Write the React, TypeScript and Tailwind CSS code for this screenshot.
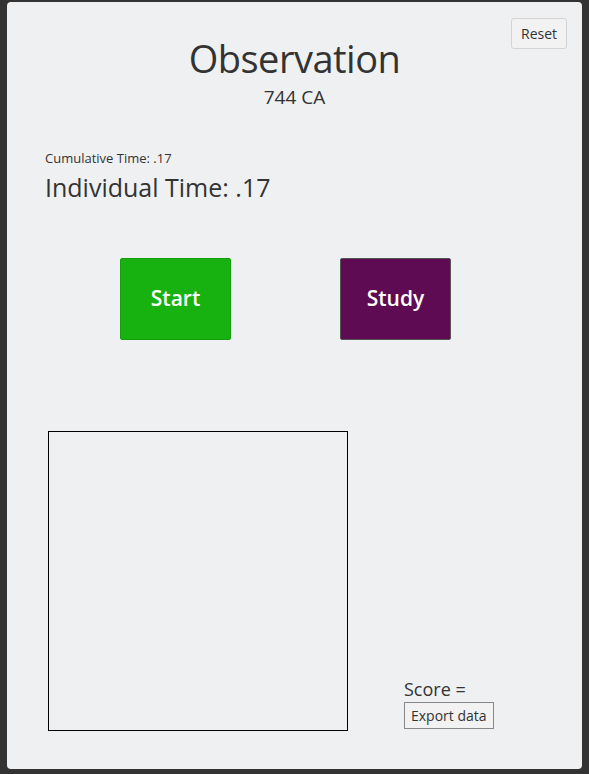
export default function App() {
  return (
    <div
      className="min-h-[774px] bg-[#333333] px-[7px] pt-[2px]"
      style={{ fontFamily: "'Open Sans', 'Noto Sans', sans-serif" }}
    >
      <div className="h-[767px] w-[575px] rounded-[4px] bg-[#eff0f2] text-[#333333]">
        {/* header */}
        <div className="grid grid-cols-[1fr_auto_1fr] pt-[16px]">
          <div />
          <div className="flex flex-col items-center pt-[18px]">
            <h1 className="text-[38px] leading-[44px] tracking-[-0.5px]">Observation</h1>
            <div className="mt-[5px] text-[19px] leading-[24px]">744 CA</div>
          </div>
          <div className="flex items-start justify-end pr-[15px]">
            <button className="h-[31px] w-[56px] rounded-[3px] border border-[#d4d4d4] bg-[#f2f2f2] text-[14px]">
              Reset
            </button>
          </div>
        </div>

        {/* times */}
        <div className="mt-[40px] pl-[38px]">
          <div className="text-[13px] leading-[18px]">Cumulative Time: .17</div>
          <div className="mt-[4px] text-[25px] leading-[32px]">Individual Time: .17</div>
        </div>

        {/* action buttons */}
        <div className="mt-[55px] flex gap-[109px] pl-[113px]">
          <button className="h-[82px] w-[111px] rounded-[2px] border border-[#13a00c] bg-[#17b20f] text-[21px] font-semibold text-white">
            Start
          </button>
          <button className="h-[82px] w-[111px] rounded-[2px] border border-[#555] bg-[#5e0b53] text-[21px] font-semibold text-white">
            Study
          </button>
        </div>

        {/* canvas + score */}
        <div className="mt-[91px] flex items-end pl-[41px]">
          <div className="h-[300px] w-[300px] border border-black" />
          <div className="ml-[56px] flex flex-col items-start pb-[2px]">
            <div className="mb-[3px] text-[18px] leading-[20px]">Score =</div>
            <button className="h-[27px] border border-[#888] bg-[#f2f2f2] px-[6px] text-[14px]">
              Export data
            </button>
          </div>
        </div>
      </div>
    </div>
  );
}
